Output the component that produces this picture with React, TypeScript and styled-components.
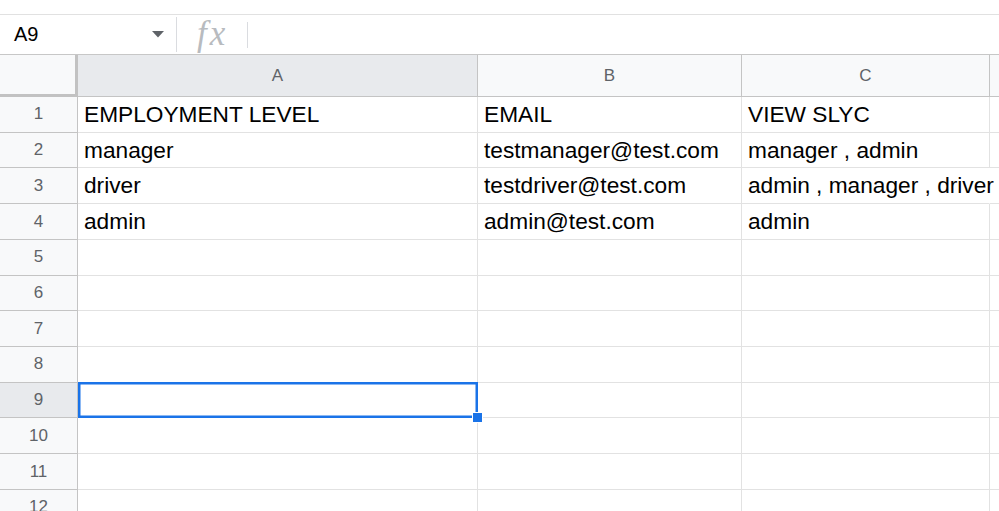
import React from "react";
import styled, { createGlobalStyle } from "styled-components";

const GlobalStyle = createGlobalStyle`
  html, body {
    margin: 0;
    padding: 0;
    background: #ffffff;
    overflow: hidden;
  }
  * { box-sizing: border-box; }
`;

const Page = styled.div`
  width: 999px;
  height: 511px;
  overflow: hidden;
  padding-top: 14px;
  display: flex;
  flex-direction: column;
  background: #ffffff;
  font-family: "Liberation Sans", Arial, sans-serif;
`;

const FormulaBar = styled.div`
  height: 41px;
  flex: none;
  display: flex;
  align-items: center;
  border-top: 1px solid #e1e1e1;
  border-bottom: 1px solid #c7c7c7;
`;

const NameBox = styled.div`
  width: 176px;
  height: 100%;
  display: flex;
  align-items: center;
  justify-content: space-between;
  padding: 0 12px 0 14px;
  font-size: 20px;
  color: #000000;
`;

const Divider = styled.div<{ $h: number; $ml?: number }>`
  width: 1px;
  height: ${(p) => p.$h}px;
  margin-left: ${(p) => p.$ml ?? 0}px;
  background: #dadce0;
  flex: none;
`;

const FxLabel = styled.span`
  margin-left: 20px;
  font-family: "Liberation Serif", "Times New Roman", serif;
  font-style: italic;
  font-size: 35px;
  line-height: 1;
  color: #b8bbbf;
  letter-spacing: 3px;
  margin-top: -3px;
`;

const Sheet = styled.div`
  flex: 1;
  display: grid;
  grid-template-columns: 78px 400px 264px 248px 1fr;
  grid-template-rows: 42px repeat(12, 35.73px);
  overflow: hidden;
`;

const CornerCell = styled.div`
  background: #f8f9fa;
  border-right: 3px solid #c2c2c2;
  border-bottom: 3px solid #c2c2c2;
`;

const ColHeader = styled.div<{ $active?: boolean; $last?: boolean }>`
  background: ${(p) => (p.$active ? "#e8eaed" : "#f8f9fa")};
  border-right: ${(p) => (p.$last ? "none" : "1px solid #c4c4c4")};
  border-bottom: 1px solid #c4c4c4;
  display: flex;
  align-items: center;
  justify-content: center;
  font-size: 17px;
  color: #5f6368;
`;

const RowHeader = styled.div<{ $active?: boolean }>`
  background: ${(p) => (p.$active ? "#e8eaed" : "#f8f9fa")};
  border-right: 1px solid #c4c4c4;
  border-bottom: 1px solid #c4c4c4;
  display: flex;
  align-items: center;
  justify-content: center;
  font-size: 17px;
  color: #5f6368;
`;

const Cell = styled.div<{ $noRight?: boolean; $selected?: boolean }>`
  position: relative;
  border-right: ${(p) => (p.$noRight ? "1px solid transparent" : "1px solid #e2e2e2")};
  border-bottom: 1px solid #e2e2e2;
  display: flex;
  align-items: center;
  padding: 0 6px;
  font-size: 22.7px;
  color: #000000;
  white-space: nowrap;
  overflow: visible;
  z-index: ${(p) => (p.$selected ? 5 : p.$noRight ? 1 : 0)};
`;

const Selection = styled.div`
  position: absolute;
  top: -1px;
  left: 0;
  right: -1px;
  bottom: -1px;
  border: 2px solid #1a73e8;
  box-shadow: inset 0 0 0 0.5px #1a73e8;
  pointer-events: none;
`;

const FillHandle = styled.div`
  position: absolute;
  right: -7px;
  bottom: -7px;
  width: 11px;
  height: 11px;
  background: #1a73e8;
  border: 1px solid #ffffff;
`;

const Caret = () => (
  <svg width="12" height="7" viewBox="0 0 12 7">
    <path d="M0 0 L12 0 L6 6.5 Z" fill="#5f6368" />
  </svg>
);

const columns = ["A", "B", "C", ""];
const data: string[][] = [
  ["EMPLOYMENT LEVEL", "EMAIL", "VIEW SLYC"],
  ["manager", "testmanager@test.com", "manager , admin"],
  ["driver", "testdriver@test.com", "admin , manager , driver"],
  ["admin", "admin@test.com", "admin"],
];

export default function App() {
  const rows = Array.from({ length: 12 }, (_, i) => i);
  return (
    <>
      <GlobalStyle />
      <Page>
        <FormulaBar>
          <NameBox>
            <span>A9</span>
            <Caret />
          </NameBox>
          <Divider $h={35} />
          <FxLabel>fx</FxLabel>
          <Divider $h={26} $ml={19} />
        </FormulaBar>
        <Sheet>
          <CornerCell />
          {columns.map((c, i) => (
            <ColHeader key={i} $active={c === "A"} $last={i === columns.length - 1}>
              {c}
            </ColHeader>
          ))}
          {rows.map((r) => {
            const values = data[r] ?? [];
            const selectedRow = r === 8;
            return (
              <React.Fragment key={r}>
                <RowHeader $active={selectedRow}>{r + 1}</RowHeader>
                {[0, 1, 2, 3].map((c) => {
                  const text = values[c] ?? "";
                  const overflow = c === 2 && r === 2;
                  const selected = selectedRow && c === 0;
                  return (
                    <Cell key={c} $noRight={overflow} $selected={selected}>
                      {text}
                      {selected && (
                        <Selection>
                          <FillHandle />
                        </Selection>
                      )}
                    </Cell>
                  );
                })}
              </React.Fragment>
            );
          })}
        </Sheet>
      </Page>
    </>
  );
}
